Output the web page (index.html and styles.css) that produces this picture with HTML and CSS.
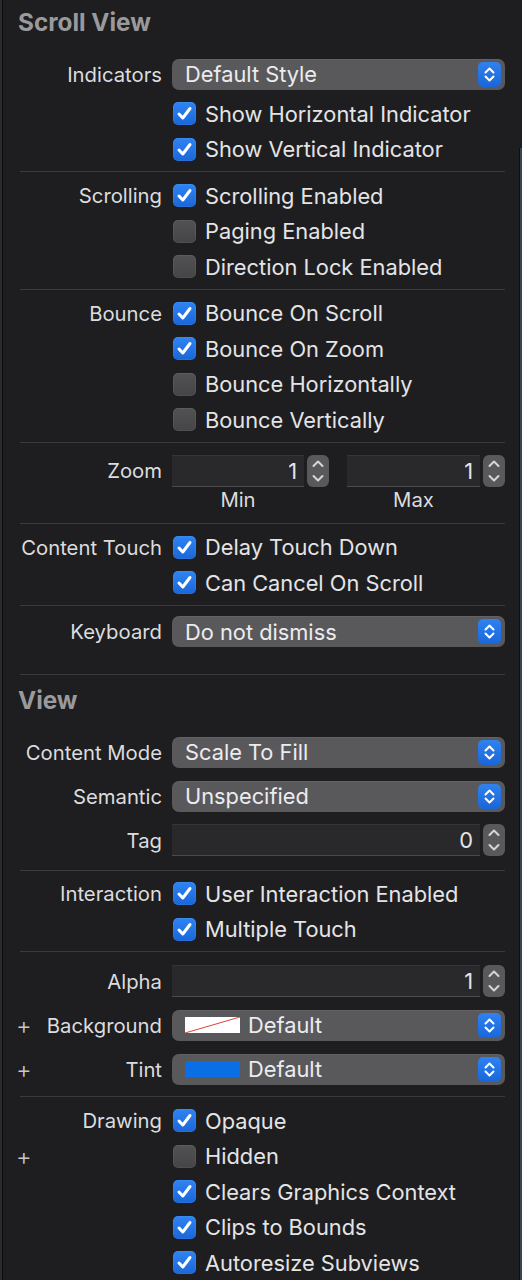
FILE: index.html
```html
<!DOCTYPE html>
<html lang="en">
<head>
    <meta charset="UTF-8">
    <meta name="viewport" content="width=device-width, initial-scale=1.0">
    <title>Attributes Inspector</title>
    <link rel="stylesheet" href="styles.css">
</head>
<body>

<div class="panel">

    <!-- Scroll View -->
    <section class="group">
        <h2 class="group-title">Scroll View</h2>
        <div class="row row-tall">
            <span class="label">Indicators</span>
            <div class="popup">
                <span class="popup-text">Default Style</span>
                <span class="popup-arrow"><svg width="23" height="25" viewBox="0 0 23 25"><path d="M7.5 10.5 L11.5 6.5 L15.5 10.5 M7.5 14.5 L11.5 18.5 L15.5 14.5" fill="none" stroke="#fff" stroke-width="2" stroke-linecap="round" stroke-linejoin="round"/></svg></span>
            </div>
        </div>
        <div class="row row-check">
            <span class="label"></span>
            <span class="check on"><span class="box"><svg width="23" height="23" viewBox="0 0 23 23"><path d="M6 12 L9.8 16 L17 6.5" fill="none" stroke="#fff" stroke-width="3" stroke-linecap="round" stroke-linejoin="round"/></svg></span>Show Horizontal Indicator</span>
        </div>
        <div class="row row-check">
            <span class="label"></span>
            <span class="check on"><span class="box"><svg width="23" height="23" viewBox="0 0 23 23"><path d="M6 12 L9.8 16 L17 6.5" fill="none" stroke="#fff" stroke-width="3" stroke-linecap="round" stroke-linejoin="round"/></svg></span>Show Vertical Indicator</span>
        </div>
    </section>
    <div class="sep"></div>

    <section class="group">
        <div class="row row-check">
            <span class="label">Scrolling</span>
            <span class="check on"><span class="box"><svg width="23" height="23" viewBox="0 0 23 23"><path d="M6 12 L9.8 16 L17 6.5" fill="none" stroke="#fff" stroke-width="3" stroke-linecap="round" stroke-linejoin="round"/></svg></span>Scrolling Enabled</span>
        </div>
        <div class="row row-check">
            <span class="label"></span>
            <span class="check"><span class="box"></span>Paging Enabled</span>
        </div>
        <div class="row row-check">
            <span class="label"></span>
            <span class="check"><span class="box"></span>Direction Lock Enabled</span>
        </div>
    </section>
    <div class="sep"></div>

    <section class="group">
        <div class="row row-check">
            <span class="label">Bounce</span>
            <span class="check on"><span class="box"><svg width="23" height="23" viewBox="0 0 23 23"><path d="M6 12 L9.8 16 L17 6.5" fill="none" stroke="#fff" stroke-width="3" stroke-linecap="round" stroke-linejoin="round"/></svg></span>Bounce On Scroll</span>
        </div>
        <div class="row row-check">
            <span class="label"></span>
            <span class="check on"><span class="box"><svg width="23" height="23" viewBox="0 0 23 23"><path d="M6 12 L9.8 16 L17 6.5" fill="none" stroke="#fff" stroke-width="3" stroke-linecap="round" stroke-linejoin="round"/></svg></span>Bounce On Zoom</span>
        </div>
        <div class="row row-check">
            <span class="label"></span>
            <span class="check"><span class="box"></span>Bounce Horizontally</span>
        </div>
        <div class="row row-check">
            <span class="label"></span>
            <span class="check"><span class="box"></span>Bounce Vertically</span>
        </div>
    </section>
    <div class="sep"></div>

    <section class="group group-zoom">
        <div class="row row-tall">
            <span class="label">Zoom</span>
            <div class="pair">
                <div class="stepper-field">
                    <span class="field">1</span>
                    <span class="stepper"><svg width="22" height="32" viewBox="0 0 22 32"><path d="M6.5 11 L11 6.5 L15.5 11 M6.5 21 L11 25.5 L15.5 21" fill="none" stroke="#d6d6d6" stroke-width="2" stroke-linecap="round" stroke-linejoin="round"/></svg></span>
                </div>
                <div class="stepper-field">
                    <span class="field">1</span>
                    <span class="stepper"><svg width="22" height="32" viewBox="0 0 22 32"><path d="M6.5 11 L11 6.5 L15.5 11 M6.5 21 L11 25.5 L15.5 21" fill="none" stroke="#d6d6d6" stroke-width="2" stroke-linecap="round" stroke-linejoin="round"/></svg></span>
                </div>
            </div>
        </div>
        <div class="row row-caption">
            <span class="label"></span>
            <div class="pair">
                <span class="caption">Min</span>
                <span class="caption">Max</span>
            </div>
        </div>
    </section>
    <div class="sep"></div>

    <section class="group">
        <div class="row row-check">
            <span class="label">Content Touch</span>
            <span class="check on"><span class="box"><svg width="23" height="23" viewBox="0 0 23 23"><path d="M6 12 L9.8 16 L17 6.5" fill="none" stroke="#fff" stroke-width="3" stroke-linecap="round" stroke-linejoin="round"/></svg></span>Delay Touch Down</span>
        </div>
        <div class="row row-check">
            <span class="label"></span>
            <span class="check on"><span class="box"><svg width="23" height="23" viewBox="0 0 23 23"><path d="M6 12 L9.8 16 L17 6.5" fill="none" stroke="#fff" stroke-width="3" stroke-linecap="round" stroke-linejoin="round"/></svg></span>Can Cancel On Scroll</span>
        </div>
    </section>
    <div class="sep"></div>

    <section class="group group-end">
        <div class="row row-tall">
            <span class="label">Keyboard</span>
            <div class="popup">
                <span class="popup-text">Do not dismiss</span>
                <span class="popup-arrow"><svg width="23" height="25" viewBox="0 0 23 25"><path d="M7.5 10.5 L11.5 6.5 L15.5 10.5 M7.5 14.5 L11.5 18.5 L15.5 14.5" fill="none" stroke="#fff" stroke-width="2" stroke-linecap="round" stroke-linejoin="round"/></svg></span>
            </div>
        </div>
    </section>
    <div class="sep"></div>

    <!-- View -->
    <section class="group group-tail">
        <h2 class="group-title title-view">View</h2>
        <div class="row row-tall">
            <span class="label">Content Mode</span>
            <div class="popup">
                <span class="popup-text">Scale To Fill</span>
                <span class="popup-arrow"><svg width="23" height="25" viewBox="0 0 23 25"><path d="M7.5 10.5 L11.5 6.5 L15.5 10.5 M7.5 14.5 L11.5 18.5 L15.5 14.5" fill="none" stroke="#fff" stroke-width="2" stroke-linecap="round" stroke-linejoin="round"/></svg></span>
            </div>
        </div>
        <div class="row row-tall">
            <span class="label">Semantic</span>
            <div class="popup">
                <span class="popup-text">Unspecified</span>
                <span class="popup-arrow"><svg width="23" height="25" viewBox="0 0 23 25"><path d="M7.5 10.5 L11.5 6.5 L15.5 10.5 M7.5 14.5 L11.5 18.5 L15.5 14.5" fill="none" stroke="#fff" stroke-width="2" stroke-linecap="round" stroke-linejoin="round"/></svg></span>
            </div>
        </div>
        <div class="row row-tall">
            <span class="label">Tag</span>
            <div class="stepper-field">
                <span class="field">0</span>
                <span class="stepper"><svg width="22" height="32" viewBox="0 0 22 32"><path d="M6.5 11 L11 6.5 L15.5 11 M6.5 21 L11 25.5 L15.5 21" fill="none" stroke="#d6d6d6" stroke-width="2" stroke-linecap="round" stroke-linejoin="round"/></svg></span>
            </div>
        </div>
    </section>
    <div class="sep"></div>

    <section class="group group-short">
        <div class="row row-check">
            <span class="label">Interaction</span>
            <span class="check on"><span class="box"><svg width="23" height="23" viewBox="0 0 23 23"><path d="M6 12 L9.8 16 L17 6.5" fill="none" stroke="#fff" stroke-width="3" stroke-linecap="round" stroke-linejoin="round"/></svg></span>User Interaction Enabled</span>
        </div>
        <div class="row row-check">
            <span class="label"></span>
            <span class="check on"><span class="box"><svg width="23" height="23" viewBox="0 0 23 23"><path d="M6 12 L9.8 16 L17 6.5" fill="none" stroke="#fff" stroke-width="3" stroke-linecap="round" stroke-linejoin="round"/></svg></span>Multiple Touch</span>
        </div>
    </section>
    <div class="sep"></div>

    <section class="group group-colors">
        <div class="row row-tall">
            <span class="label">Alpha</span>
            <div class="stepper-field">
                <span class="field">1</span>
                <span class="stepper"><svg width="22" height="32" viewBox="0 0 22 32"><path d="M6.5 11 L11 6.5 L15.5 11 M6.5 21 L11 25.5 L15.5 21" fill="none" stroke="#d6d6d6" stroke-width="2" stroke-linecap="round" stroke-linejoin="round"/></svg></span>
            </div>
        </div>
        <div class="row row-tall">
            <span class="label has-plus"><span class="plus">+</span>Background</span>
            <div class="popup">
                <span class="swatch swatch-clear"><svg width="55" height="16" viewBox="0 0 55 16" preserveAspectRatio="none"><line x1="0" y1="16" x2="55" y2="0" stroke="#e0403c" stroke-width="1"/></svg></span>
                <span class="popup-text">Default</span>
                <span class="popup-arrow"><svg width="23" height="25" viewBox="0 0 23 25"><path d="M7.5 10.5 L11.5 6.5 L15.5 10.5 M7.5 14.5 L11.5 18.5 L15.5 14.5" fill="none" stroke="#fff" stroke-width="2" stroke-linecap="round" stroke-linejoin="round"/></svg></span>
            </div>
        </div>
        <div class="row row-tall">
            <span class="label has-plus"><span class="plus">+</span>Tint</span>
            <div class="popup">
                <span class="swatch swatch-blue"></span>
                <span class="popup-text">Default</span>
                <span class="popup-arrow"><svg width="23" height="25" viewBox="0 0 23 25"><path d="M7.5 10.5 L11.5 6.5 L15.5 10.5 M7.5 14.5 L11.5 18.5 L15.5 14.5" fill="none" stroke="#fff" stroke-width="2" stroke-linecap="round" stroke-linejoin="round"/></svg></span>
            </div>
        </div>
    </section>
    <div class="sep"></div>

    <section class="group">
        <div class="row row-check">
            <span class="label">Drawing</span>
            <span class="check on"><span class="box"><svg width="23" height="23" viewBox="0 0 23 23"><path d="M6 12 L9.8 16 L17 6.5" fill="none" stroke="#fff" stroke-width="3" stroke-linecap="round" stroke-linejoin="round"/></svg></span>Opaque</span>
        </div>
        <div class="row row-check">
            <span class="label has-plus"><span class="plus">+</span></span>
            <span class="check"><span class="box"></span>Hidden</span>
        </div>
        <div class="row row-check">
            <span class="label"></span>
            <span class="check on"><span class="box"><svg width="23" height="23" viewBox="0 0 23 23"><path d="M6 12 L9.8 16 L17 6.5" fill="none" stroke="#fff" stroke-width="3" stroke-linecap="round" stroke-linejoin="round"/></svg></span>Clears Graphics Context</span>
        </div>
        <div class="row row-check">
            <span class="label"></span>
            <span class="check on"><span class="box"><svg width="23" height="23" viewBox="0 0 23 23"><path d="M6 12 L9.8 16 L17 6.5" fill="none" stroke="#fff" stroke-width="3" stroke-linecap="round" stroke-linejoin="round"/></svg></span>Clips to Bounds</span>
        </div>
        <div class="row row-check">
            <span class="label"></span>
            <span class="check on"><span class="box"><svg width="23" height="23" viewBox="0 0 23 23"><path d="M6 12 L9.8 16 L17 6.5" fill="none" stroke="#fff" stroke-width="3" stroke-linecap="round" stroke-linejoin="round"/></svg></span>Autoresize Subviews</span>
        </div>
    </section>

    <div class="edge"></div>
</div>

</body>
</html>
```

FILE: styles.css
```css
body {
    margin: 0;
    background-color: #1e1e20;
    font-family: Inter, "Noto Sans", sans-serif;
    font-size: 21.8px;
    color: #e4e4e6;
}
.panel {
    position: relative;
    min-height: 1280px;
    border-left: 2px solid #2c2c2e;
    box-shadow: inset 1px 0 0 #0c0c0d;
    padding-left: 1px;
}
.group {
    padding: 6px 0 4px;
}
.group-end {
    padding: 4px 0 20.5px;
}
.group-tail {
    padding-bottom: 8px;
}
.group-short {
    padding: 5px 0 4px;
}
.group-colors {
    padding: 7px 0 5px;
}
.group-title {
    margin: 3px 0 17px 15px;
    height: 26px;
    line-height: 26px;
    font-size: 24.3px;
    font-weight: 700;
    color: #9a9a9d;
}
.title-view {
    margin-top: 6px;
}
.sep {
    height: 1px;
    margin: 0 17px;
    background-color: #3a3a3c;
}
.row {
    display: grid;
    grid-template-columns: 159px 333px;
    column-gap: 10px;
    align-items: center;
}
.row-check {
    height: 35.5px;
}
.row-tall {
    height: 44px;
}
.row-caption {
    height: 20px;
    margin: -3px 0 9px;
}
.label {
    display: flex;
    justify-content: flex-end;
    align-items: center;
    white-space: nowrap;
    font-size: 20.3px;
    color: #dcdcde;
}
.label.has-plus {
    justify-content: space-between;
}
.plus {
    padding-left: 13px;
    font-size: 24px;
    font-weight: 300;
    color: #c8c8ca;
}
.check {
    display: flex;
    align-items: center;
    gap: 9px;
    margin-left: 1px;
    white-space: nowrap;
}
.box {
    width: 23px;
    height: 23px;
    border-radius: 5px;
    background: linear-gradient(#525254, #454547);
    box-shadow: inset 0 0 0 1px rgba(255, 255, 255, 0.06);
}
.check.on .box {
    background: linear-gradient(#2f84f2, #1a66d8);
}
.box svg {
    display: block;
}
.popup {
    display: flex;
    align-items: center;
    height: 31px;
    padding: 0 4px 0 13px;
    border-radius: 7px;
    background-color: #59595c;
    box-shadow: inset 0 1px 0 rgba(255, 255, 255, 0.06);
    color: #ececee;
}
.popup-text {
    flex: 1;
}
.popup-arrow {
    width: 23px;
    height: 25px;
    border-radius: 5px;
    background: linear-gradient(#2f82f0, #1a66d8);
}
.popup-arrow svg {
    display: block;
}
.swatch {
    width: 55px;
    height: 16px;
    margin-right: 8px;
}
.swatch svg {
    display: block;
}
.swatch-clear {
    background-color: #fff;
}
.swatch-blue {
    background-color: #0a6fe4;
}
.pair {
    display: grid;
    grid-template-columns: 157px 158px;
    column-gap: 18px;
}
.stepper-field {
    display: flex;
    align-items: center;
    gap: 3px;
}
.field {
    flex: 1;
    height: 30px;
    line-height: 30px;
    padding-right: 7px;
    text-align: right;
    background-color: #29292b;
    border-top: 1px solid #353537;
    border-bottom: 1px solid #4b4b4d;
    color: #e4e4e6;
}
.stepper {
    width: 22px;
    height: 32px;
    border-radius: 6px;
    background-color: #59595c;
}
.stepper svg {
    display: block;
}
.caption {
    text-align: center;
    margin-right: 25px;
    line-height: 20px;
    font-size: 20.3px;
    color: #dcdcde;
}
.edge {
    position: absolute;
    top: 148px;
    bottom: 0;
    right: 0;
    width: 2px;
    border-left: 1px solid #0e0e10;
    background-color: #3b4552;
}
```
